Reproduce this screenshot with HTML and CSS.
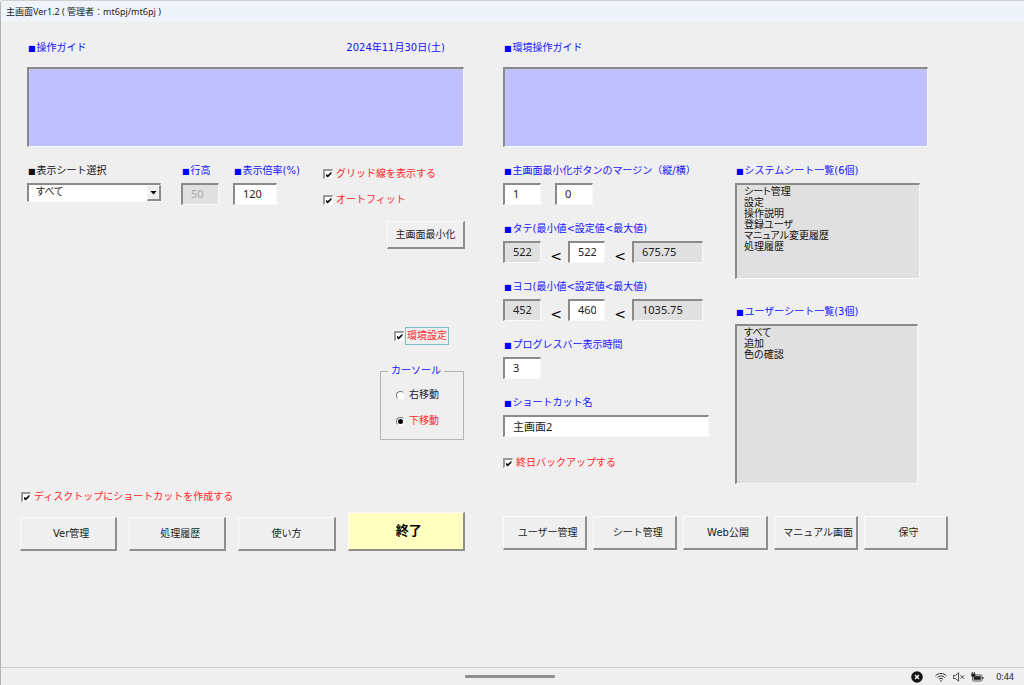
FILE: index.html
```html
<!DOCTYPE html>
<html lang="ja">
<head>
<meta charset="utf-8">
<meta name="viewport" content="width=device-width, initial-scale=1">
<title>主画面Ver1.2</title>
<link rel="stylesheet" href="styles.css">
</head>
<body>
<header class="titlebar">主画面Ver1.2 ( 管理者：mt6pj/mt6pj )</header>
<main class="form">
  <section class="panel">
    <div class="heading">
      <label class="label" for="guide"><span class="mark">■</span>操作ガイド</label>
      <time class="date" datetime="2024-11-30">2024年11月30日(土)</time>
    </div>
    <textarea class="guide guide-main" id="guide" readonly></textarea>
    <div class="options">
      <div class="field">
        <label class="label dark" for="sheet"><span class="mark">■</span>表示シート選択</label>
        <div class="combo">
          <select id="sheet"><option>すべて</option><option>追加</option><option>色の確認</option></select>
          <span class="combo-button"></span>
        </div>
      </div>
      <div class="field">
        <label class="label" for="rowheight"><span class="mark">■</span>行高</label>
        <input class="box small" id="rowheight" type="text" value="50" disabled>
      </div>
      <div class="field">
        <label class="label" for="scale"><span class="mark">■</span>表示倍率(%)</label>
        <input class="box medium" id="scale" type="text" value="120">
      </div>
      <div class="checks">
        <label class="check"><input type="checkbox" checked>グリッド線を表示する</label>
        <label class="check"><input type="checkbox" checked>オートフィット</label>
      </div>
    </div>
    <button class="button minimize" type="button">主画面最小化</button>
    <label class="check environment"><input type="checkbox" checked><span class="focus">環境設定</span></label>
    <fieldset class="cursor">
      <legend>カーソール</legend>
      <label class="radio"><input type="radio" name="cursor">右移動</label>
      <label class="radio red"><input type="radio" name="cursor" checked>下移動</label>
    </fieldset>
    <label class="check desktop"><input type="checkbox" checked>ディスクトップにショートカットを作成する</label>
    <div class="actions actions-main">
      <button class="button shifted" type="button">Ver管理</button>
      <button class="button shifted" type="button">処理履歴</button>
      <button class="button" type="button">使い方</button>
      <button class="button shifted exit" type="button">終了</button>
    </div>
  </section>

  <section class="panel">
    <div class="heading heading-env">
      <label class="label" for="envguide"><span class="mark">■</span>環境操作ガイド</label>
    </div>
    <textarea class="guide guide-env" id="envguide" readonly></textarea>
    <div class="environment-grid">
      <div class="settings">
        <div class="field">
          <label class="label" for="margin1"><span class="mark">■</span>主画面最小化ボタンのマージン（縦/横）</label>
          <div class="pair">
            <input class="box small" id="margin1" type="text" value="1">
            <input class="box small" type="text" value="0" aria-label="横">
          </div>
        </div>
        <div class="field">
          <label class="label" for="tate"><span class="mark">■</span>タテ(最小値&lt;設定値&lt;最大値)</label>
          <div class="range">
            <input class="box" type="text" value="522" readonly aria-label="タテ最小値"><span class="less">&lt;</span>
            <input class="box" id="tate" type="text" value="522"><span class="less">&lt;</span>
            <input class="box" type="text" value="675.75" readonly aria-label="タテ最大値">
          </div>
        </div>
        <div class="field">
          <label class="label" for="yoko"><span class="mark">■</span>ヨコ(最小値&lt;設定値&lt;最大値)</label>
          <div class="range">
            <input class="box" type="text" value="452" readonly aria-label="ヨコ最小値"><span class="less">&lt;</span>
            <input class="box" id="yoko" type="text" value="460"><span class="less">&lt;</span>
            <input class="box" type="text" value="1035.75" readonly aria-label="ヨコ最大値">
          </div>
        </div>
        <div class="field">
          <label class="label" for="progress"><span class="mark">■</span>プログレスバー表示時間</label>
          <input class="box small" id="progress" type="text" value="3">
        </div>
        <div class="field">
          <label class="label" for="shortcut"><span class="mark">■</span>ショートカット名</label>
          <input class="box" id="shortcut" type="text" value="主画面2">
        </div>
        <label class="check backup"><input type="checkbox" checked>終日バックアップする</label>
      </div>
      <div class="lists">
        <div class="field">
          <label class="label" for="system"><span class="mark">■</span>システムシート一覧(6個)</label>
          <select class="list list-system" id="system" size="6">
            <option>シート管理</option><option>設定</option><option>操作説明</option><option>登録ユーザ</option><option>マニュアル変更履歴</option><option>処理履歴</option>
          </select>
        </div>
        <div class="field field-user">
          <label class="label" for="user"><span class="mark">■</span>ユーザーシート一覧(3個)</label>
          <select class="list list-user" id="user" size="3">
            <option>すべて</option><option>追加</option><option>色の確認</option>
          </select>
        </div>
      </div>
    </div>
    <div class="actions actions-env">
      <button class="button shifted" type="button">ユーザー管理</button>
      <button class="button shifted" type="button">シート管理</button>
      <button class="button shifted" type="button">Web公開</button>
      <button class="button shifted" type="button">マニュアル画面</button>
      <button class="button shifted" type="button">保守</button>
    </div>
  </section>
</main>
<footer class="statusbar">
  <span class="handle"></span>
  <div class="tray">
    <svg class="close" viewBox="0 0 12 12" width="12" height="12"><circle cx="6" cy="6" r="5.8" fill="#151515"/><path d="M4 4l4 4M8 4l-4 4" stroke="#fff" stroke-width="1.400"/></svg>
    <svg viewBox="0 0 12 10" width="12" height="10" fill="none" stroke="#333" stroke-width="1"><path d="M.5 3.800C3.700.7 8.300.7 11.500 3.800M2.200 5.600c2.200-2.100 5.400-2.100 7.600 0M3.900 7.300c1.200-1.200 3-1.200 4.200 0"/><circle cx="6" cy="8.700" r=".8" fill="#333" stroke="none"/></svg>
    <svg viewBox="0 0 12 10" width="12" height="10" fill="none" stroke="#333" stroke-width=".9"><path d="M.6 3.400h2l3-2.600v8.400l-3-2.600h-2zM7.500 3.200l3.600 3.600M11.100 3.200L7.500 6.800"/></svg>
    <svg class="battery" viewBox="0 0 13 10" width="13" height="10"><rect x="1.500" y="3" width="9.500" height="6" rx="1.200" fill="none" stroke="#333" stroke-width=".8"/><rect x="2.700" y="4.200" width="7.100" height="3.600" fill="#222"/><path d="M11.300 5h1.200v2h-1.200z" fill="#333"/><path d="M1.300 0v2M3.300 0v2" stroke="#222" stroke-width=".9"/><path d="M.2 1.800h4.200v1.500Q4.400 5 2.300 5T.2 3.300z" fill="#222"/></svg>
    <time class="clock">0:44</time>
  </div>
</footer>
</body>
</html>
```
FILE: styles.css
```css
* {
  box-sizing: border-box;
}

body {
  margin: 0;
  min-height: 100vh;
  display: flex;
  flex-direction: column;
  background: #efefef;
  border-left: 1px solid #b4b4b4;
  border-top: 1px solid #d0d0d0;
  border-top-left-radius: 4px;
  color: #222;
  font: 10px/14px "DejaVu Sans", "Noto Sans CJK JP", sans-serif;
}

button, input, select, textarea {
  margin: 0;
  border-radius: 0;
  color: inherit;
  font: inherit;
}

.titlebar {
  padding: 4px 5px 3px;
  background: #eff3fa;
  font: 9px/14px "Noto Sans", "Noto Sans CJK JP", sans-serif;
}

.form {
  flex: 1;
  display: grid;
  grid-template-columns: minmax(0, 1fr) minmax(0, 1fr);
  align-items: start;
  gap: 38px;
  padding: 19px 76px 24px 19px;
}

.panel {
  display: flex;
  flex-direction: column;
}

.heading {
  display: flex;
  justify-content: space-between;
  padding: 0 20px 0 7px;
}

.heading-env {
  padding-left: 0;
}

.label, .date, legend {
  color: #1414ff;
  white-space: nowrap;
}

.label {
  height: 14px;
  padding-left: 1px;
}

.mark {
  margin-right: 1px;
  color: #00f;
  font: 8px/8px "DejaVu Sans", sans-serif;
}

.dark, .dark .mark {
  color: #111;
}

.guide, .box, .combo select, .list {
  border: 1px solid #f8f8f8;
  border-top: 2px solid #8a8a8a;
  border-left: 2px solid #8a8a8a;
  outline: none;
}

.guide {
  height: 80px;
  margin-top: 12px;
  background: #c0c0ff;
  resize: none;
}

.guide-main {
  margin-left: 7px;
  margin-right: 1px;
}

.guide-env {
  margin-right: 20px;
}

.options {
  display: grid;
  grid-template-columns: 154px 52px 90px 1fr;
  align-items: start;
  margin: 17px 0 0 7px;
}

.field {
  display: flex;
  flex-direction: column;
  gap: 5px;
}

.box {
  width: 100%;
  height: 22px;
  padding: 0 8px 2px;
  background: #fff;
  font: 11px/14px "Noto Sans", "Noto Sans CJK JP", sans-serif;
}

.small {
  width: 38px;
}

.medium {
  width: 44px;
}

.box:read-only {
  background: #e0e0e0;
}

.box:disabled {
  color: #a8a8a8;
}

.combo {
  position: relative;
  width: 134px;
}

.combo select {
  appearance: none;
  display: block;
  width: 100%;
  height: 19px;
  padding: 0 18px 4px 7px;
  background: #fff;
  font-feature-settings: "palt";
}

.combo-button {
  position: absolute;
  top: 2px;
  right: 0;
  bottom: 1px;
  width: 14px;
  display: grid;
  place-items: center;
  background: #efefef;
  border: 1px solid #f8f8f8;
  border-right: 2px solid #8a8a8a;
  border-bottom: 2px solid #8a8a8a;
  pointer-events: none;
}

.combo-button::before {
  content: "";
  width: 7px;
  height: 4px;
  background: #000;
  clip-path: polygon(0 0, 100% 0, 50% 100%);
}

.checks {
  display: flex;
  flex-direction: column;
  gap: 12px;
  padding-top: 3px;
}

.check {
  display: flex;
  align-items: center;
  gap: 3px;
  color: #ff2626;
  white-space: nowrap;
}

.check input {
  appearance: none;
  display: grid;
  place-items: center;
  width: 10px;
  height: 10px;
  background: #fff;
  border: 1px solid #f8f8f8;
  border-top: 2px solid #999;
  border-left: 2px solid #999;
}

.check input:checked::before {
  content: "";
  width: 6px;
  height: 6px;
  background: #111;
  clip-path: polygon(0 35%, 38% 60%, 100% 0, 100% 38%, 38% 100%, 0 70%);
}

.button {
  min-height: 34px;
  padding: 0;
  background: #efefef;
  border: 1px solid #fafafa;
  border-right: 2px solid #8e8e8e;
  border-bottom: 2px solid #8e8e8e;
  white-space: nowrap;
}

.shifted {
  padding-left: 6px;
}

.minimize {
  align-self: flex-end;
  width: 78px;
  min-height: 28px;
  margin-top: 14px;
}

.environment {
  align-self: flex-end;
  gap: 1px;
  margin: 78px 16px 0 0;
}

.focus {
  padding: 1px;
  border: 1px solid #7dbcb8;
}

.cursor {
  align-self: flex-end;
  width: 84px;
  margin: 19px 1px 0 0;
  padding: 10px 15px 11px;
  border: 1px solid #b4b4b4;
  display: flex;
  flex-direction: column;
  gap: 12px;
}

legend {
  margin-left: -8px;
  padding: 0 3px;
}

.radio {
  display: flex;
  align-items: center;
  gap: 4px;
}

.red {
  color: #ff2626;
}

.radio input {
  appearance: none;
  display: grid;
  place-items: center;
  width: 9px;
  height: 9px;
  background: #fff;
  border: 1px solid #f4f4f4;
  border-top-color: #777;
  border-left-color: #777;
  border-radius: 50%;
}

.radio input:checked::before {
  content: "";
  width: 5px;
  height: 5px;
  background: #000;
  border-radius: 50%;
}

.desktop {
  margin-top: 50px;
  padding-left: 1px;
}

.actions {
  display: grid;
  align-items: end;
}

.actions-main {
  grid-template-columns: 97fr 97fr 97fr 117fr;
  gap: 12px;
  margin-top: 8px;
}

.exit {
  min-height: 39px;
  background: #ffffc0;
  color: #000;
  font-size: 13px;
  font-weight: 700;
}

.environment-grid {
  display: grid;
  grid-template-columns: minmax(0, 206fr) minmax(0, 185fr);
  gap: 26px;
  margin: 17px 28px 0 0;
}

.settings {
  display: flex;
  flex-direction: column;
  gap: 17px;
}

.pair {
  display: flex;
  gap: 14px;
}

.range {
  display: grid;
  grid-template-columns: 38px 27px 37px 27px 71px;
}

.less {
  align-self: end;
  padding-left: 3px;
  color: #000;
  font-size: 14px;
  text-align: center;
}

.backup {
  margin-top: 2px;
}

.lists {
  display: flex;
  flex-direction: column;
  gap: 26px;
}

.field-user {
  padding-right: 2px;
}

.list {
  width: 100%;
  overflow: hidden;
  padding: 0;
  background: #e0e0e0;
  color: #111;
  font-feature-settings: "palt";
}

.list option {
  display: flex;
  align-items: center;
  height: 11px;
  min-height: 0;
  padding: 0 7px;
}

.list-system {
  height: 96px;
}

.list-user {
  height: 160px;
}

.actions-env {
  grid-template-columns: repeat(5, 1fr);
  gap: 6px;
  margin-top: 32px;
}

.statusbar {
  display: grid;
  grid-template-columns: 1fr 90px 1fr;
  align-items: center;
  height: 18px;
  padding-right: 6px;
  border-top: 1px solid #c8c8c8;
}

.handle {
  grid-column: 2;
  height: 3px;
  background: #909090;
  border-radius: 1px;
}

.tray {
  display: flex;
  align-items: center;
  justify-content: flex-end;
  gap: 6px;
  padding-right: 4px;
}

.close {
  margin-right: 6px;
}

.clock {
  margin-left: 6px;
  font: 9px/14px "Noto Sans", sans-serif;
}
```
